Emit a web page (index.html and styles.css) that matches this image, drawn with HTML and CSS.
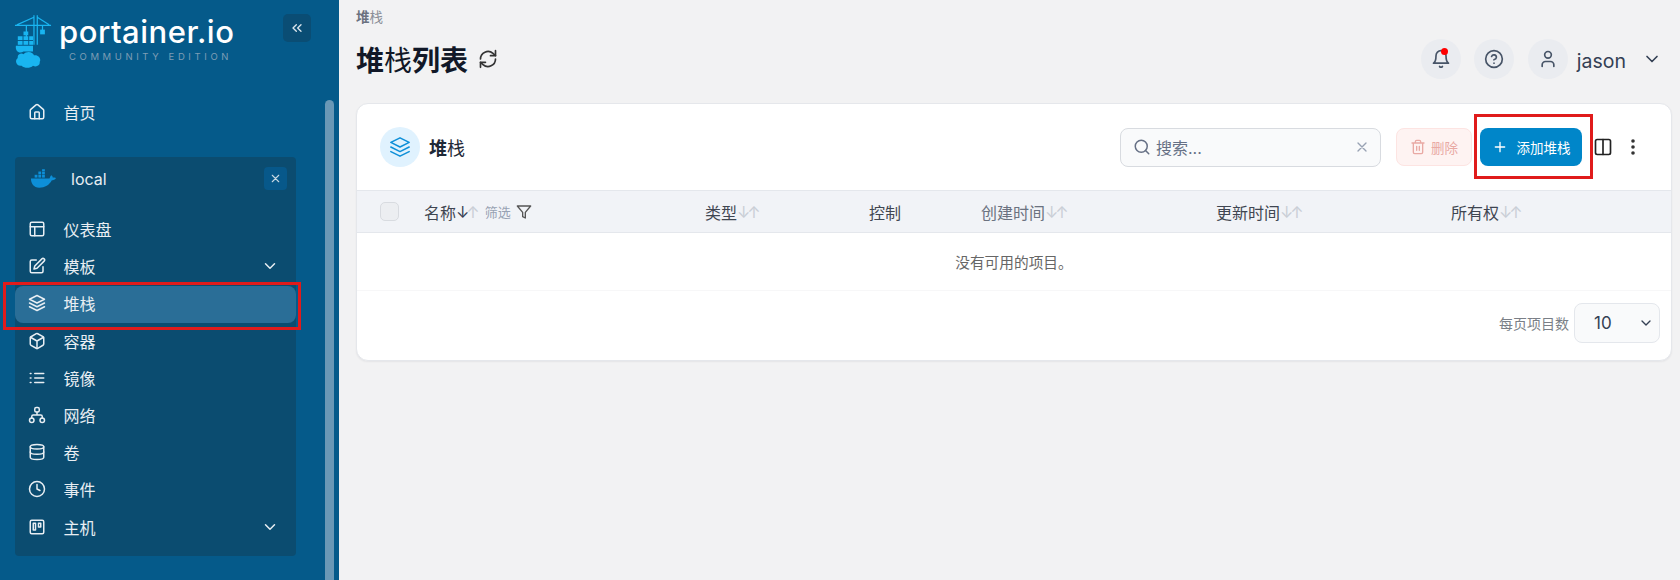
FILE: index.html
```html
<!DOCTYPE html>
<html lang="zh-CN">
<head>
  <meta charset="UTF-8">
  <title>堆栈列表 - Portainer</title>
  <link rel="stylesheet" href="styles.css">
</head>
<body>

  <!-- icon sprite -->
  <svg class="sprite" xmlns="http://www.w3.org/2000/svg">
    <symbol id="i-home" viewBox="0 0 24 24"><path d="M15 21v-8a1 1 0 0 0-1-1h-4a1 1 0 0 0-1 1v8"/><path d="M3 10a2 2 0 0 1 .7-1.500l7-6a2 2 0 0 1 2.600 0l7 6A2 2 0 0 1 21 10v9a2 2 0 0 1-2 2H5a2 2 0 0 1-2-2z"/></symbol>
    <symbol id="i-layout" viewBox="0 0 24 24"><rect x="3" y="3" width="18" height="18" rx="2"/><path d="M3 9h18M9 21V9"/></symbol>
    <symbol id="i-edit" viewBox="0 0 24 24"><path d="M11 4H5a2 2 0 0 0-2 2v13a2 2 0 0 0 2 2h13a2 2 0 0 0 2-2v-6"/><path d="M18.500 2.500a2.100 2.100 0 0 1 3 3L12 15l-4 1 1-4z"/></symbol>
    <symbol id="i-layers" viewBox="0 0 24 24"><path d="M12 2 2 7l10 5 10-5z"/><path d="m2 17 10 5 10-5"/><path d="m2 12 10 5 10-5"/></symbol>
    <symbol id="i-box" viewBox="0 0 24 24"><path d="M21 16V8a2 2 0 0 0-1-1.700l-7-4a2 2 0 0 0-2 0l-7 4A2 2 0 0 0 3 8v8a2 2 0 0 0 1 1.700l7 4a2 2 0 0 0 2 0l7-4a2 2 0 0 0 1-1.700z"/><path d="M3.300 7 12 12l8.700-5M12 22V12"/></symbol>
    <symbol id="i-list" viewBox="0 0 24 24"><path d="M9 6h12M9 12h12M9 18h12M3 6h1M3 12h1M3 18h1"/></symbol>
    <symbol id="i-network" viewBox="0 0 24 24"><rect x="9" y="2" width="6" height="6" rx="2"/><rect x="2" y="16" width="6" height="6" rx="3"/><rect x="16" y="16" width="6" height="6" rx="3"/><path d="M5 16v-2a2 2 0 0 1 2-2h10a2 2 0 0 1 2 2v2M12 8v4"/></symbol>
    <symbol id="i-database" viewBox="0 0 24 24"><ellipse cx="12" cy="5" rx="9" ry="3"/><path d="M21 12c0 1.700-4 3-9 3s-9-1.300-9-3"/><path d="M3 5v14c0 1.700 4 3 9 3s9-1.300 9-3V5"/></symbol>
    <symbol id="i-clock" viewBox="0 0 24 24"><circle cx="12" cy="12" r="10"/><path d="M12 6v6l4 2"/></symbol>
    <symbol id="i-trello" viewBox="0 0 24 24"><rect x="3" y="3" width="18" height="18" rx="2"/><rect x="7" y="7" width="3" height="9"/><rect x="14" y="7" width="3" height="5"/></symbol>
    <symbol id="i-chevron" viewBox="0 0 24 24"><path d="m6 9 6 6 6-6"/></symbol>
    <symbol id="i-close" viewBox="0 0 24 24"><path d="M18 6 6 18M6 6l12 12"/></symbol>
  </svg>

  <div class="app">
    <aside class="sidebar">
      <div class="sidebar-top">
        <div class="logo">
          <svg class="logo-mark" viewBox="0 0 40 56" xmlns="http://www.w3.org/2000/svg">
            <g fill="none" stroke="#19b5f1" stroke-width="1.300">
              <path d="M1 11.500h38M21 1v31M24.500 1v31M21 3 3 11M24.500 3 37 11"/>
              <path d="M13 11.500v13M30 11.500v5"/>
            </g>
            <rect x="27.500" y="16" width="5" height="5" fill="#19b5f1"/>
            <g fill="#19b5f1">
              <rect x="10" y="18" width="5" height="4"/>
              <rect x="4" y="23" width="5" height="4"/>
              <rect x="10" y="23" width="5" height="4"/>
              <rect x="16" y="23" width="4" height="4"/>
              <rect x="4" y="28" width="5" height="4"/>
              <rect x="10" y="28" width="5" height="4"/>
              <rect x="16" y="28" width="4" height="4"/>
              <path d="M2 33h18v6H10c-4 3-9 0-8-6z"/>
              <path d="M8 54c-5 1-8-5-4-8-1-4 4-6 6-4 3-4 10-3 11 1 5-1 8 4 6 7 1 4-4 6-7 4-3 3-9 3-12 0z"/>
            </g>
          </svg>
          <div class="logo-text">
            <div class="logo-name">portainer.io</div>
            <div class="logo-sub">COMMUNITY EDITION</div>
          </div>
        </div>
        <button class="collapse-btn">
          <svg class="icon" viewBox="0 0 24 24"><path d="m11 17-5-5 5-5M18 17l-5-5 5-5"/></svg>
        </button>
      </div>

      <a class="nav-item home-link"><svg class="icon"><use href="#i-home"/></svg>首页</a>

      <div class="env-panel">
        <div class="env-head">
          <svg class="docker" viewBox="0 0 28 20" xmlns="http://www.w3.org/2000/svg">
            <g fill="#0d8fd8">
              <rect x="5" y="6" width="3" height="3"/>
              <rect x="9" y="6" width="3" height="3"/>
              <rect x="13" y="6" width="3" height="3"/>
              <rect x="9" y="2.500" width="3" height="3"/>
              <rect x="13" y="2.500" width="3" height="3"/>
              <rect x="13" y="0" width="3" height="2"/>
              <path d="M1 10h20c1-2 1-3 2-3.500 1 .5 1.500 1.500 1.500 2.500 1 0 2.500 0 3.500.5-1 2-3 2.500-4.500 2.500C21 17 16 20 10 20 4 20 1 15 1 10z"/>
            </g>
          </svg>
          <span class="env-name">local</span>
          <button class="env-close"><svg class="icon"><use href="#i-close"/></svg></button>
        </div>
        <a class="nav-item"><svg class="icon"><use href="#i-layout"/></svg>仪表盘</a>
        <a class="nav-item"><svg class="icon"><use href="#i-edit"/></svg>模板<svg class="icon chevron"><use href="#i-chevron"/></svg></a>
        <a class="nav-item active"><svg class="icon"><use href="#i-layers"/></svg>堆栈</a>
        <a class="nav-item"><svg class="icon"><use href="#i-box"/></svg>容器</a>
        <a class="nav-item"><svg class="icon"><use href="#i-list"/></svg>镜像</a>
        <a class="nav-item"><svg class="icon"><use href="#i-network"/></svg>网络</a>
        <a class="nav-item"><svg class="icon"><use href="#i-database"/></svg>卷</a>
        <a class="nav-item"><svg class="icon"><use href="#i-clock"/></svg>事件</a>
        <a class="nav-item"><svg class="icon"><use href="#i-trello"/></svg>主机<svg class="icon chevron"><use href="#i-chevron"/></svg></a>
      </div>

      <div class="scroll-thumb"></div>
    </aside>

    <main class="content">
      <div class="breadcrumb"><b>堆</b>栈</div>

      <header class="page-head">
        <h1>堆<span class="lt">栈</span>列表
          <svg class="icon refresh" viewBox="0 0 24 24"><path d="M21 2v6h-6"/><path d="M3 12a9 9 0 0 1 15-6.700L21 8"/><path d="M3 22v-6h6"/><path d="M21 12a9 9 0 0 1-15 6.700L3 16"/></svg>
        </h1>
        <div class="user-menu">
          <span class="round-btn bell">
            <svg class="icon" viewBox="0 0 24 24"><path d="M6 8a6 6 0 0 1 12 0c0 7 3 9 3 9H3s3-2 3-9"/><path d="M10.300 21a2 2 0 0 0 3.400 0"/></svg>
          </span>
          <span class="round-btn">
            <svg class="icon" viewBox="0 0 24 24"><circle cx="12" cy="12" r="10"/><path d="M9.100 9a3 3 0 0 1 5.800 1c0 2-3 3-3 3M12 17h.01"/></svg>
          </span>
          <span class="round-btn">
            <svg class="icon" viewBox="0 0 24 24"><path d="M19 21v-2a4 4 0 0 0-4-4H9a4 4 0 0 0-4 4v2"/><circle cx="12" cy="7" r="4"/></svg>
          </span>
          <span class="user-name">jason</span>
          <svg class="icon user-chevron"><use href="#i-chevron"/></svg>
        </div>
      </header>

      <section class="card">
        <div class="card-head">
          <span class="card-icon"><svg class="icon"><use href="#i-layers"/></svg></span>
          <h2><b>堆</b>栈</h2>
          <div class="search">
            <svg class="icon" viewBox="0 0 24 24"><circle cx="11" cy="11" r="8"/><path d="m21 21-4.300-4.300"/></svg>
            <span class="search-text">搜索...</span>
            <svg class="icon search-clear"><use href="#i-close"/></svg>
          </div>
          <button class="btn btn-delete">
            <svg class="icon" viewBox="0 0 24 24"><path d="M3 6h18M19 6v14a2 2 0 0 1-2 2H7a2 2 0 0 1-2-2V6M8 6V4a2 2 0 0 1 2-2h4a2 2 0 0 1 2 2v2M10 11v6M14 11v6"/></svg>
            <span>删除</span>
          </button>
          <button class="btn btn-add">
            <svg class="icon" viewBox="0 0 24 24"><path d="M12 5v14M5 12h14"/></svg>
            <span>添加堆<span class="lt">栈</span></span>
          </button>
          <svg class="icon columns-icon" viewBox="0 0 24 24"><rect x="3" y="3" width="18" height="18" rx="2"/><path d="M12 3v18"/></svg>
          <svg class="dots-icon" viewBox="0 0 6 18"><circle cx="3" cy="3" r="1.800"/><circle cx="3" cy="9" r="1.800"/><circle cx="3" cy="15" r="1.800"/></svg>
        </div>

        <div class="table-head">
          <div class="th th-check"><span class="checkbox"></span></div>
          <div class="th th-name">名称<span class="sort"><span class="sort-on">↓</span>↑</span>
            <span class="filter">筛选
              <svg class="icon" viewBox="0 0 24 24"><path d="M22 3H2l8 9.500V19l4 2v-8.500z"/></svg>
            </span>
          </div>
          <div class="th th-type">类型<span class="sort">↓↑</span></div>
          <div class="th th-control">控制</div>
          <div class="th th-created"><span class="lt-th">创建时间</span><span class="sort">↓↑</span></div>
          <div class="th th-updated">更新时间<span class="sort">↓↑</span></div>
          <div class="th">所有权<span class="sort">↓↑</span></div>
        </div>

        <div class="empty-row">没有可用的项目。</div>

        <div class="card-foot">
          <span class="page-label">每页项目数</span>
          <div class="page-select">10<svg class="icon"><use href="#i-chevron"/></svg></div>
        </div>
      </section>
    </main>
  </div>

</body>
</html>
```

FILE: styles.css
```css
* {
  box-sizing: border-box;
}

html, body {
  margin: 0;
  height: 100%;
  overflow: hidden;
}

body {
  font-family: Inter, "Noto Sans CJK SC", sans-serif;
  background: #f2f2f3;
  color: #1f2937;
}

.sprite {
  display: none;
}

.icon {
  width: 16px;
  height: 16px;
  flex: none;
  fill: none;
  stroke: currentColor;
  stroke-width: 2;
  stroke-linecap: round;
  stroke-linejoin: round;
}

.app {
  display: flex;
  height: 580px;
}

/* sidebar */
.sidebar {
  position: relative;
  width: 339px;
  flex: none;
  background: #055a8a;
  color: #e8eef3;
  padding: 14px 43px 0 15px;
}

.sidebar-top {
  display: flex;
  justify-content: space-between;
  align-items: flex-start;
  height: 79.5px;
}

.logo {
  display: flex;
  align-items: flex-start;
  gap: 7px;
}

.logo-mark {
  width: 38px;
  height: 54px;
  margin-left: -1px;
}

.logo-name {
  font-size: 31px;
  font-weight: 500;
  line-height: 37.5px;
  letter-spacing: 0.5px;
  color: #fff;
  margin-top: -1px;
  white-space: nowrap;
}

.logo-sub {
  font-size: 9.5px;
  line-height: 11px;
  letter-spacing: 3.6px;
  color: #7d9db5;
  margin-left: 10px;
  white-space: nowrap;
}

.collapse-btn {
  width: 28px;
  height: 28px;
  display: flex;
  align-items: center;
  justify-content: center;
  padding: 0;
  border: none;
  border-radius: 5px;
  background: #0a4d74;
  color: #dbe5ec;
  margin-right: -15px;
}

.nav-item {
  position: relative;
  display: flex;
  align-items: center;
  height: 37.2px;
  padding: 0 14px 2px 13px;
  gap: 17.5px;
  font-size: 16px;
  color: #e8eef3;
  border-radius: 8px;
}

.nav-item .icon {
  width: 18px;
  height: 18px;
}

.home-link {
  height: 37px;
  padding-bottom: 0;
  margin-bottom: 26px;
}

.nav-item .chevron {
  margin-left: auto;
  margin-right: 3px;
}

.nav-item.active {
  background: #2a6e97;
}

/* red highlight drawn over the screenshot */
.nav-item.active::after,
.btn-add::after {
  content: "";
  position: absolute;
  border: 3px solid #e01b1b;
  pointer-events: none;
}

.nav-item.active::after {
  top: -4px;
  bottom: -7px;
  left: -12px;
  right: -5px;
}

.env-panel {
  background: #0b4c70;
  border-radius: 4px;
  height: 399px;
}

.env-head {
  display: flex;
  align-items: center;
  height: 44px;
  padding: 0 9px 0 15px;
  margin-bottom: 11px;
}

.docker {
  width: 26px;
  height: 19px;
}

.env-name {
  margin-left: 15px;
  font-size: 16px;
}

.env-close {
  margin-left: auto;
  width: 23px;
  height: 23px;
  display: flex;
  align-items: center;
  justify-content: center;
  padding: 0;
  border: none;
  border-radius: 4px;
  background: #07588a;
  color: #c9d8e2;
}

.env-close .icon {
  width: 13px;
  height: 13px;
}

.scroll-thumb {
  position: absolute;
  top: 100px;
  bottom: -10px;
  left: 325px;
  width: 9px;
  border-radius: 5px;
  background: #6a98b6;
}

/* main */
.content {
  flex: 1;
  min-width: 0;
  padding: 0 8px 0 17px;
}

.breadcrumb {
  height: 36px;
  padding-top: 9px;
  font-size: 13.5px;
  line-height: 17px;
  color: #8a8f98;
}

.breadcrumb b {
  color: #6b7280;
}

.page-head {
  display: flex;
  justify-content: space-between;
  align-items: center;
  height: 46px;
  margin-bottom: 21px;
}

.page-head h1 {
  display: flex;
  align-items: center;
  margin: 0;
  font-size: 28px;
  font-weight: 700;
  color: #111827;
}

.lt {
  font-weight: 400;
}

.refresh {
  width: 20px;
  height: 20px;
  margin-left: 10px;
  color: #333;
}

.user-menu {
  display: flex;
  align-items: center;
  margin-right: 10px;
}

.round-btn {
  position: relative;
  width: 40px;
  height: 40px;
  display: flex;
  align-items: center;
  justify-content: center;
  border-radius: 50%;
  background: #eaecf0;
  color: #475467;
  margin-right: 13.5px;
}

.round-btn .icon {
  width: 20px;
  height: 20px;
}

.round-btn:nth-child(3) {
  margin-right: 9px;
}

.bell::after {
  content: "";
  position: absolute;
  top: 9px;
  right: 13px;
  width: 7px;
  height: 7px;
  border-radius: 50%;
  background: #f00;
}

.user-name {
  padding-top: 3px;
  font-size: 19.5px;
  color: #344054;
}

.user-chevron {
  width: 20px;
  height: 20px;
  margin-left: 16px;
  color: #344054;
}

/* card */
.card {
  height: 258px;
  background: #fff;
  border: 1px solid #e5e7eb;
  border-radius: 12px;
  box-shadow: 0 1px 2px rgba(16, 24, 40, 0.06);
}

.card-head {
  display: flex;
  align-items: center;
  height: 86px;
  padding: 0 35px 0 23px;
}

.card-icon {
  width: 40px;
  height: 40px;
  display: flex;
  align-items: center;
  justify-content: center;
  border-radius: 50%;
  background: #e0f2fe;
  color: #0d8fd8;
  margin-right: 9px;
}

.card-icon .icon {
  width: 22px;
  height: 22px;
  stroke-width: 1.7;
}

.card-head h2 {
  margin: 0;
  font-size: 18px;
  font-weight: 400;
  color: #1f2937;
}

.search {
  display: flex;
  align-items: center;
  width: 261px;
  height: 39px;
  margin-left: auto;
  padding: 0 10px 0 12px;
  border: 1px solid #d8dbe0;
  border-radius: 8px;
  background: #f9fafb;
  color: #667085;
}

.search > .icon:first-child {
  width: 18px;
  height: 18px;
}

.search-text {
  margin-left: 5px;
  font-size: 16px;
}

.search-clear {
  margin-left: auto;
  color: #98a2b3;
}

.btn {
  position: relative;
  display: flex;
  align-items: center;
  justify-content: center;
  height: 38px;
  padding: 0;
  border-radius: 8px;
  font-family: inherit;
  font-size: 13.5px;
}

.btn-delete {
  width: 76px;
  margin-left: 15px;
  gap: 5px;
  border: 1px solid #fde4e2;
  background: #fef3f2;
  color: #e9a9a4;
}

.btn-add {
  width: 102px;
  margin-left: 8px;
  gap: 9px;
  border: none;
  background: #0086c9;
  color: #fff;
}

.btn-add::after {
  top: -14px;
  bottom: -13px;
  left: -6px;
  right: -11px;
}

.columns-icon {
  width: 20px;
  height: 20px;
  margin-left: 11px;
  color: #222;
}

.dots-icon {
  width: 6px;
  height: 18px;
  margin-left: 17px;
  fill: #333;
}

/* table */
.table-head {
  display: grid;
  grid-template-columns: 44px 281px 164px 112px 235px 235px 1fr;
  align-items: center;
  height: 43px;
  padding-left: 23px;
  background: #f1f3f7;
  border-top: 1px solid #e4e7ec;
  border-bottom: 1px solid #e4e7ec;
  font-size: 16px;
  color: #3f4651;
}

.th {
  display: flex;
  align-items: center;
  white-space: nowrap;
}

.lt-th {
  color: #6b7280;
}

.checkbox {
  width: 19px;
  height: 19px;
  border: 1.5px solid #d8dbe0;
  border-radius: 5px;
  background: #eceef1;
}

.sort {
  color: #c9ced6;
  font-size: 16px;
  letter-spacing: -3px;
  margin-right: 3px;
}

.sort-on {
  color: #344054;
}

.filter {
  display: flex;
  align-items: center;
  gap: 5px;
  margin-left: 5px;
  font-size: 13px;
  color: #98a2b3;
}

.filter .icon {
  color: #555;
}

.empty-row {
  height: 58px;
  display: flex;
  align-items: center;
  justify-content: center;
  font-size: 14.7px;
  color: #666;
  border-bottom: 1px solid #f7f7f8;
}

.card-foot {
  display: flex;
  align-items: center;
  justify-content: flex-end;
  height: 63px;
  padding-right: 11px;
}

.page-label {
  font-size: 14px;
  color: #7a7f87;
  margin-right: 5px;
}

.page-select {
  display: flex;
  align-items: center;
  justify-content: space-between;
  width: 86px;
  height: 40px;
  padding: 0 5px 0 19px;
  border: 1px solid #e4e7ec;
  border-radius: 8px;
  background: #f9fafb;
  font-size: 17px;
  color: #344054;
}
```
